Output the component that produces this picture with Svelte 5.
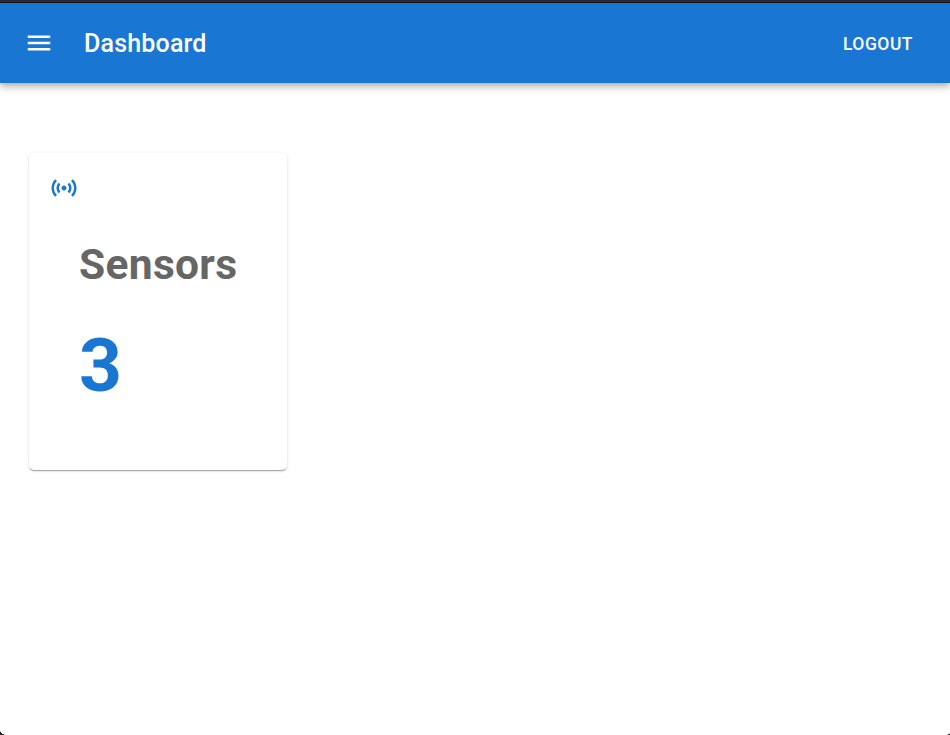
<script>
  const title = 'Dashboard';
  const sensorCount = 3;
</script>

<div class="window">
  <header class="app-bar">
    <button class="menu" aria-label="Open menu">
      <svg viewBox="0 0 24 24"><path d="M3 18h18v-2H3v2zm0-5h18v-2H3v2zm0-7v2h18V6H3z" /></svg>
    </button>
    <h1>{title}</h1>
    <button class="logout">Logout</button>
  </header>

  <main>
    <section class="card">
      <svg class="sensors-icon" viewBox="0 0 24 24"><path d="M7.76 16.24C6.67 15.16 6 13.66 6 12s.67-3.16 1.76-4.24l1.42 1.42C8.45 9.9 8 10.9 8 12c0 1.1.45 2.1 1.17 2.83l-1.41 1.41zm8.48 0C17.33 15.16 18 13.66 18 12s-.67-3.16-1.76-4.24l-1.42 1.42C15.55 9.9 16 10.9 16 12c0 1.1-.45 2.1-1.17 2.83l1.41 1.41zM12 10c-1.1 0-2 .9-2 2s.9 2 2 2 2-.9 2-2-.9-2-2-2zm8 2c0 2.21-.9 4.21-2.35 5.65l1.42 1.42C20.88 17.26 22 14.76 22 12s-1.12-5.26-2.93-7.07l-1.42 1.42C19.1 7.79 20 9.79 20 12zM6.35 6.35 4.93 4.93C3.12 6.74 2 9.24 2 12s1.12 5.26 2.93 7.07l1.42-1.42C4.9 16.21 4 14.21 4 12s.9-4.21 2.35-5.65z" /></svg>
      <div class="content">
        <h2>Sensors</h2>
        <p>{sensorCount}</p>
      </div>
    </section>
  </main>
  <i class="corner left"></i>
  <i class="corner right"></i>
</div>

<style>
  :global(body) {
    margin: 0;
    background: #fff;
  }
  .window {
    position: relative;
    box-sizing: border-box;
    height: 735px;
    overflow: hidden;
    border-top: 2px solid #2b2a33;
    background: #fff;
    font-family: Roboto, sans-serif;
  }
  .app-bar {
    display: flex;
    align-items: center;
    box-sizing: border-box;
    height: 81px;
    padding: 0 27px 0 24px;
    border-top: 1px solid #111419;
    background: #1976d2;
    color: #fff;
    box-shadow: 0 2.5px 5px -1.25px rgba(0, 0, 0, 0.2), 0 5px 6.25px rgba(0, 0, 0, 0.14), 0 1.25px 12.5px rgba(0, 0, 0, 0.12);
  }
  svg {
    display: block;
    width: 30px;
    height: 30px;
    fill: currentColor;
  }
  button {
    border: 0;
    padding: 0;
    background: none;
    color: inherit;
    font-family: inherit;
  }
  h1 {
    flex: 1;
    margin: 0 0 0 30px;
    padding-top: 2px;
    font-size: 25px;
    font-weight: 500;
    line-height: 40px;
    letter-spacing: 0.0075em;
  }
  .logout {
    padding: 2px 10px 0;
    font-size: 17.5px;
    font-weight: 500;
    line-height: 30px;
    letter-spacing: 0.02857em;
    text-transform: uppercase;
  }
  main {
    padding: 70px 29px;
  }
  .card {
    box-sizing: border-box;
    width: 258px;
    height: 317px;
    padding: 20px;
    border-radius: 5px;
    background: #fff;
    box-shadow: 0 2px 1px -1px rgba(0, 0, 0, 0.2), 0 1px 1px rgba(0, 0, 0, 0.14), 0 1px 3.75px rgba(0, 0, 0, 0.12);
  }
  .sensors-icon {
    color: #1976d2;
  }
  .content {
    padding: 36px 0 0 30px;
  }
  h2 {
    margin: 0;
    color: #666;
    font-size: 42.5px;
    font-weight: 700;
    line-height: 52px;
    letter-spacing: 0.00735em;
  }
  p {
    margin: 29px 0 0;
    color: #1976d2;
    font-size: 75px;
    font-weight: 700;
    line-height: 90px;
    letter-spacing: -0.00833em;
  }
  .corner {
    position: absolute;
    bottom: 0;
    width: 7px;
    height: 5px;
  }
  .left {
    background: radial-gradient(ellipse 7px 5px at 100% 0, transparent 95%, #222 105%);
  }
  .right {
    right: 0;
    width: 6px;
    height: 2px;
    background: radial-gradient(ellipse 6px 2px at 0 0, transparent 90%, #222 110%);
  }
</style>
